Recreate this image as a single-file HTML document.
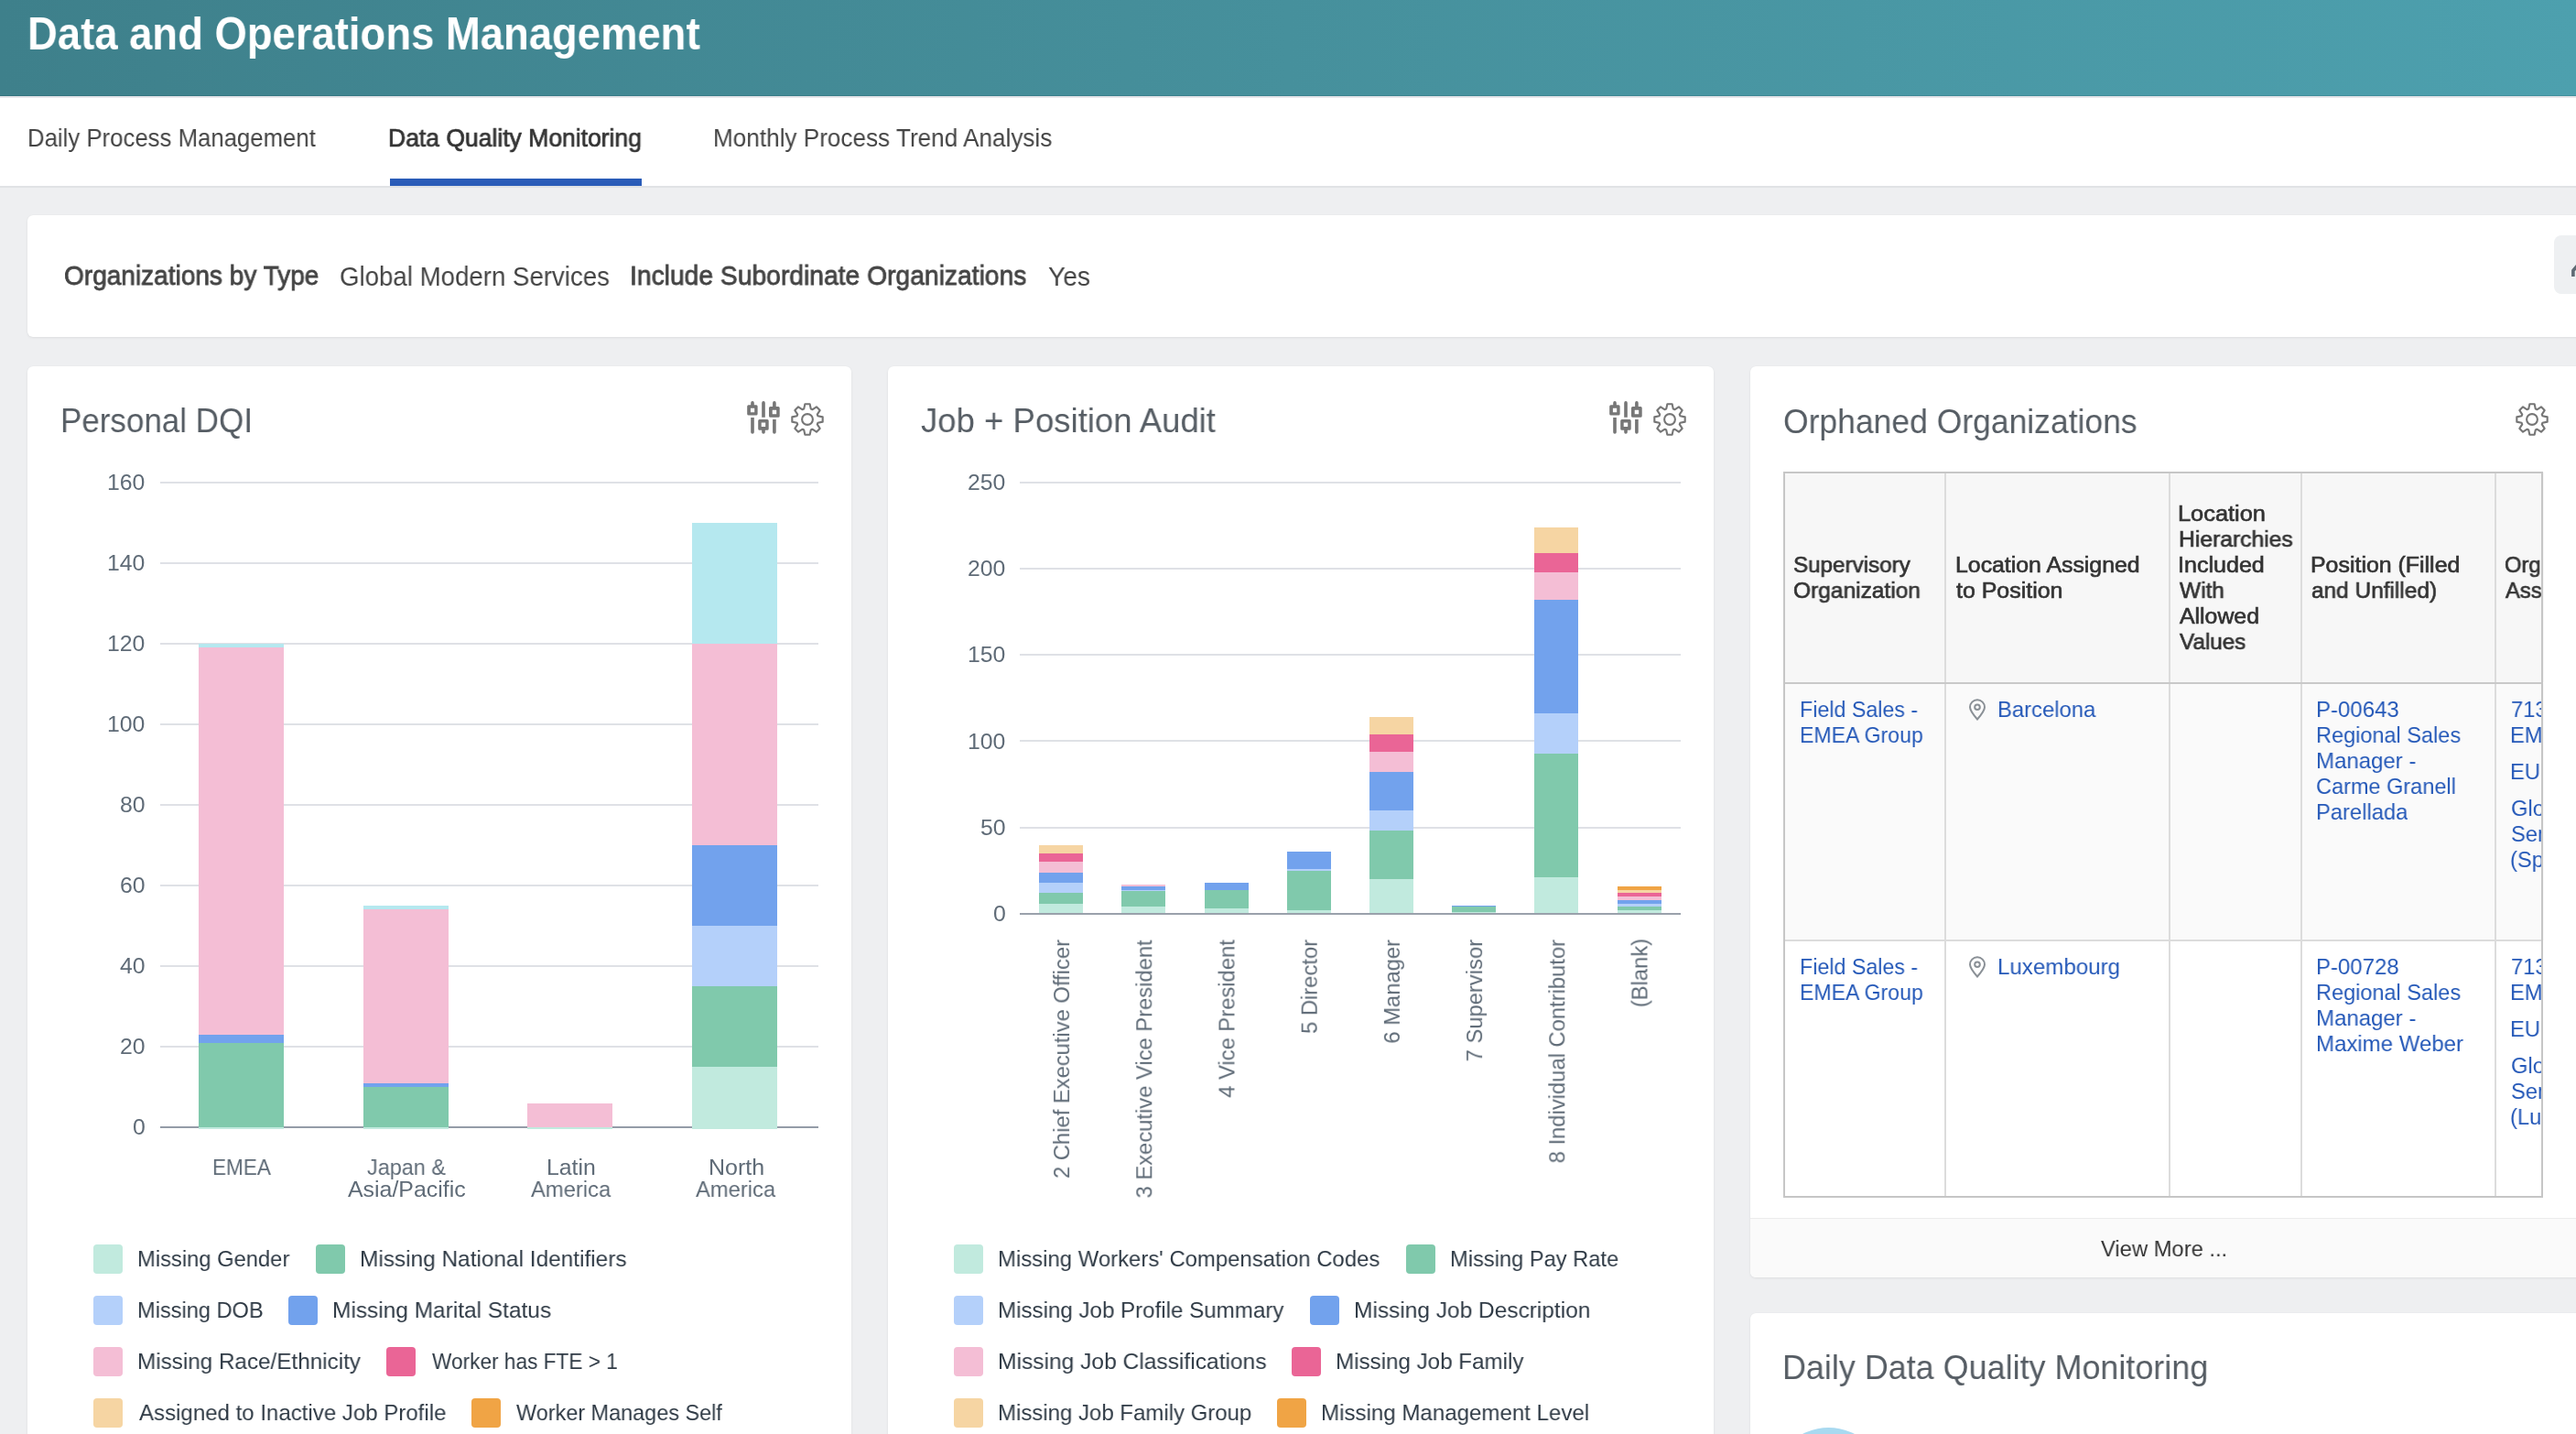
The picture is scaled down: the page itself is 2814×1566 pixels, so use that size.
<!DOCTYPE html><html><head><meta charset="utf-8"><style>
html,body{margin:0;padding:0;}
body{width:2814px;height:1566px;overflow:hidden;position:relative;background:#eeeff1;font-family:"Liberation Sans",sans-serif;}
.t{position:absolute;white-space:nowrap;transform-origin:0 0;will-change:transform;}
.r{position:absolute;}
.card{position:absolute;background:#fff;border-radius:6px;box-shadow:0 1px 3px rgba(0,0,0,0.07),0 0 1px rgba(0,0,0,0.05);}
svg{position:absolute;overflow:visible;}
</style></head><body>
<div class="r" style="left:0;top:0;width:2814px;height:105px;background:linear-gradient(90deg,#3e808b 0%,#46909c 50%,#4da0ae 100%);"></div>
<div class="r" style="left:0.00px;top:104.00px;width:2814.00px;height:1.00px;background:rgba(0,40,50,0.12);"></div>
<div class="r" style="left:0.00px;top:105.00px;width:2814.00px;height:2.00px;background:#e6e6ea;"></div>
<div class="t" style="left:29.95px;top:13.00px;font-size:49.60px;line-height:49.60px;font-weight:700;color:#ffffff;transform:scaleX(0.9160);">Data and Operations Management</div>
<div class="r" style="left:0.00px;top:107.00px;width:2814.00px;height:96.00px;background:#ffffff;"></div>
<div class="r" style="left:0.00px;top:203.00px;width:2814.00px;height:2.00px;background:#e0e2e5;"></div>
<div class="t" style="left:29.94px;top:138.00px;font-size:26.87px;line-height:26.87px;font-weight:400;color:#444444;transform:scaleX(0.9586);">Daily Process Management</div>
<div class="t" style="left:424.48px;top:138.00px;font-size:26.87px;line-height:26.87px;font-weight:400;color:#333333;transform:scaleX(0.9867);-webkit-text-stroke:0.73px #333333;">Data Quality Monitoring</div>
<div class="t" style="left:778.91px;top:138.00px;font-size:26.87px;line-height:26.87px;font-weight:400;color:#444444;transform:scaleX(0.9728);">Monthly Process Trend Analysis</div>
<div class="r" style="left:426.00px;top:195.00px;width:275.00px;height:8.00px;background:#2a5cb8;"></div>
<div class="card" style="left:30px;top:235px;width:2830px;height:133px;"></div>
<div class="t" style="left:69.94px;top:287.00px;font-size:28.94px;line-height:28.94px;font-weight:400;color:#444444;transform:scaleX(0.9686);-webkit-text-stroke:0.78px #444444;">Organizations by Type</div>
<div class="t" style="left:370.62px;top:288.00px;font-size:28.94px;line-height:28.94px;font-weight:400;color:#444444;transform:scaleX(0.9553);">Global Modern Services</div>
<div class="t" style="left:687.76px;top:287.00px;font-size:28.94px;line-height:28.94px;font-weight:400;color:#444444;transform:scaleX(0.9761);-webkit-text-stroke:0.78px #444444;">Include Subordinate Organizations</div>
<div class="t" style="left:1145.10px;top:288.00px;font-size:28.94px;line-height:28.94px;font-weight:400;color:#444444;transform:scaleX(0.9729);">Yes</div>
<div class="r" style="left:2790px;top:257px;width:60px;height:64px;background:#eef0f2;border-radius:8px;"></div>
<svg style="left:2800px;top:280px" width="20" height="30" viewBox="0 0 20 30"><path d="M10.9 22 V15.5 L16 9.5" stroke="#5f6a74" stroke-width="3.6" fill="none" stroke-linejoin="round"/></svg>
<div class="card" style="left:30px;top:400px;width:900px;height:1200px;"></div>
<div class="t" style="left:66.20px;top:441.00px;font-size:37.20px;line-height:37.20px;font-weight:400;color:#565d64;transform:scaleX(0.9405);">Personal DQI</div>
<svg style="left:816px;top:438px" width="36" height="36" viewBox="0 0 36 36"><g fill="#767676" fill-rule="evenodd">
<path d="M4.2 6V1.9a1.8 1.8 0 0 1 3.6 0V6z"/>
<path d="M1.7 4.2h8.4a1.5 1.5 0 0 1 1.5 1.5v8.4a1.5 1.5 0 0 1-1.5 1.5H1.7A1.5 1.5 0 0 1 .2 14.1V5.7a1.5 1.5 0 0 1 1.5-1.5zM3.9 7.7v4.5h4.3V7.7z"/>
<path d="M4.2 18H7.8V34a1.8 1.8 0 0 1-3.6 0z"/>
<path d="M16.2 17.7V1.9a1.8 1.8 0 0 1 3.6 0V17.7z"/>
<path d="M13.7 20.1h8.5a1.5 1.5 0 0 1 1.5 1.5v8.6a1.5 1.5 0 0 1-1.5 1.5h-8.5a1.5 1.5 0 0 1-1.5-1.5v-8.6a1.5 1.5 0 0 1 1.5-1.5zM15.7 23.6v4.5h4.5v-4.5z"/>
<path d="M16.2 30H19.8V34a1.8 1.8 0 0 1-3.6 0z"/>
<path d="M28.1 8V1.9a1.8 1.8 0 0 1 3.6 0V8z"/>
<path d="M25.5 6h8.7a1.5 1.5 0 0 1 1.5 1.5v8.7a1.5 1.5 0 0 1-1.5 1.5h-8.7A1.5 1.5 0 0 1 24 16.2V7.5A1.5 1.5 0 0 1 25.5 6zM27.7 9.7v4.5h4.5V9.7z"/>
<path d="M28.1 19.9H31.7V34a1.8 1.8 0 0 1-3.6 0z"/>
</g></svg>
<svg style="left:864px;top:440px" width="36" height="36" viewBox="0 0 36 36"><path d="M14.19 6.62 L15.36 1.31 L20.64 1.31 L21.81 6.62 A12.0 12.0 0 0 1 23.35 7.26 L27.93 4.33 L31.67 8.07 L28.74 12.65 A12.0 12.0 0 0 1 29.38 14.19 L34.69 15.36 L34.69 20.64 L29.38 21.81 A12.0 12.0 0 0 1 28.74 23.35 L31.67 27.93 L27.93 31.67 L23.35 28.74 A12.0 12.0 0 0 1 21.81 29.38 L20.64 34.69 L15.36 34.69 L14.19 29.38 A12.0 12.0 0 0 1 12.65 28.74 L8.07 31.67 L4.33 27.93 L7.26 23.35 A12.0 12.0 0 0 1 6.62 21.81 L1.31 20.64 L1.31 15.36 L6.62 14.19 A12.0 12.0 0 0 1 7.26 12.65 L4.33 8.07 L8.07 4.33 L12.65 7.26 A12.0 12.0 0 0 1 14.19 6.62Z" fill="none" stroke="#767676" stroke-width="2.1" stroke-linejoin="round"/><circle cx="18" cy="18" r="5.9" fill="none" stroke="#767676" stroke-width="2.1"/></svg>
<div class="t" style="left:144.73px;top:1219.00px;font-size:24.80px;line-height:24.80px;font-weight:400;color:#5f6b77;transform:scaleX(1.0000);">0</div>
<div class="r" style="left:175.00px;top:1142.00px;width:719.00px;height:2.00px;background:#dfe1e6;"></div>
<div class="t" style="left:130.96px;top:1131.00px;font-size:24.80px;line-height:24.80px;font-weight:400;color:#5f6b77;transform:scaleX(1.0000);">20</div>
<div class="r" style="left:175.00px;top:1054.00px;width:719.00px;height:2.00px;background:#dfe1e6;"></div>
<div class="t" style="left:130.96px;top:1043.00px;font-size:24.80px;line-height:24.80px;font-weight:400;color:#5f6b77;transform:scaleX(1.0000);">40</div>
<div class="r" style="left:175.00px;top:966.00px;width:719.00px;height:2.00px;background:#dfe1e6;"></div>
<div class="t" style="left:130.96px;top:955.00px;font-size:24.80px;line-height:24.80px;font-weight:400;color:#5f6b77;transform:scaleX(1.0000);">60</div>
<div class="r" style="left:175.00px;top:878.00px;width:719.00px;height:2.00px;background:#dfe1e6;"></div>
<div class="t" style="left:130.96px;top:867.00px;font-size:24.80px;line-height:24.80px;font-weight:400;color:#5f6b77;transform:scaleX(1.0000);">80</div>
<div class="r" style="left:175.00px;top:790.00px;width:719.00px;height:2.00px;background:#dfe1e6;"></div>
<div class="t" style="left:117.20px;top:779.00px;font-size:24.80px;line-height:24.80px;font-weight:400;color:#5f6b77;transform:scaleX(1.0000);">100</div>
<div class="r" style="left:175.00px;top:702.00px;width:719.00px;height:2.00px;background:#dfe1e6;"></div>
<div class="t" style="left:117.20px;top:691.00px;font-size:24.80px;line-height:24.80px;font-weight:400;color:#5f6b77;transform:scaleX(1.0000);">120</div>
<div class="r" style="left:175.00px;top:614.00px;width:719.00px;height:2.00px;background:#dfe1e6;"></div>
<div class="t" style="left:117.20px;top:603.00px;font-size:24.80px;line-height:24.80px;font-weight:400;color:#5f6b77;transform:scaleX(1.0000);">140</div>
<div class="r" style="left:175.00px;top:526.00px;width:719.00px;height:2.00px;background:#dfe1e6;"></div>
<div class="t" style="left:117.20px;top:515.00px;font-size:24.80px;line-height:24.80px;font-weight:400;color:#5f6b77;transform:scaleX(1.0000);">160</div>
<div class="r" style="left:175.00px;top:1230.00px;width:719.00px;height:2.00px;background:#949ca7;"></div>
<div class="r" style="left:216.98px;top:1231.00px;width:93.00px;height:2.00px;background:#c1eade;"></div>
<div class="r" style="left:216.98px;top:1138.60px;width:93.00px;height:92.40px;background:#80c9ac;"></div>
<div class="r" style="left:216.98px;top:1129.80px;width:93.00px;height:8.80px;background:#72a2ed;"></div>
<div class="r" style="left:216.98px;top:707.40px;width:93.00px;height:422.40px;background:#f4bed5;"></div>
<div class="r" style="left:216.98px;top:703.00px;width:93.00px;height:4.40px;background:#b5e8ef;"></div>
<div class="t" style="left:231.90px;top:1263.00px;font-size:24.80px;line-height:24.80px;font-weight:400;color:#5f6b77;transform:scaleX(0.9090);">EMEA</div>
<div class="r" style="left:396.73px;top:1231.00px;width:93.00px;height:2.00px;background:#c1eade;"></div>
<div class="r" style="left:396.73px;top:1187.00px;width:93.00px;height:44.00px;background:#80c9ac;"></div>
<div class="r" style="left:396.73px;top:1182.60px;width:93.00px;height:4.40px;background:#72a2ed;"></div>
<div class="r" style="left:396.73px;top:993.40px;width:93.00px;height:189.20px;background:#f4bed5;"></div>
<div class="r" style="left:396.73px;top:989.00px;width:93.00px;height:4.40px;background:#b5e8ef;"></div>
<div class="t" style="left:401.25px;top:1263.00px;font-size:24.80px;line-height:24.80px;font-weight:400;color:#5f6b77;transform:scaleX(0.9437);">Japan &amp;</div>
<div class="t" style="left:380.28px;top:1287.00px;font-size:24.80px;line-height:24.80px;font-weight:400;color:#5f6b77;transform:scaleX(1.0040);">Asia/Pacific</div>
<div class="r" style="left:576.48px;top:1231.00px;width:93.00px;height:2.00px;background:#c1eade;"></div>
<div class="r" style="left:576.48px;top:1204.60px;width:93.00px;height:26.40px;background:#f4bed5;"></div>
<div class="t" style="left:597.42px;top:1263.00px;font-size:24.80px;line-height:24.80px;font-weight:400;color:#5f6b77;transform:scaleX(0.9960);">Latin</div>
<div class="t" style="left:580.28px;top:1287.00px;font-size:24.80px;line-height:24.80px;font-weight:400;color:#5f6b77;transform:scaleX(0.9584);">America</div>
<div class="r" style="left:756.23px;top:1231.00px;width:93.00px;height:2.00px;background:#c1eade;"></div>
<div class="r" style="left:756.23px;top:1165.00px;width:93.00px;height:66.00px;background:#c1eade;"></div>
<div class="r" style="left:756.23px;top:1077.00px;width:93.00px;height:88.00px;background:#80c9ac;"></div>
<div class="r" style="left:756.23px;top:1011.00px;width:93.00px;height:66.00px;background:#b4d0fa;"></div>
<div class="r" style="left:756.23px;top:923.00px;width:93.00px;height:88.00px;background:#72a2ed;"></div>
<div class="r" style="left:756.23px;top:703.00px;width:93.00px;height:220.00px;background:#f4bed5;"></div>
<div class="r" style="left:756.23px;top:571.00px;width:93.00px;height:132.00px;background:#b5e8ef;"></div>
<div class="t" style="left:773.50px;top:1263.00px;font-size:24.80px;line-height:24.80px;font-weight:400;color:#5f6b77;transform:scaleX(1.0080);">North</div>
<div class="t" style="left:760.28px;top:1287.00px;font-size:24.80px;line-height:24.80px;font-weight:400;color:#5f6b77;transform:scaleX(0.9573);">America</div>
<div class="r" style="left:102px;top:1359px;width:32px;height:32px;border-radius:4px;background:#c1eade"></div>
<div class="t" style="left:150.10px;top:1363.00px;font-size:24.80px;line-height:24.80px;font-weight:400;color:#2f3a45;transform:scaleX(0.9576);">Missing Gender</div>
<div class="r" style="left:344.7px;top:1359px;width:32px;height:32px;border-radius:4px;background:#80c9ac"></div>
<div class="t" style="left:392.75px;top:1363.00px;font-size:24.80px;line-height:24.80px;font-weight:400;color:#2f3a45;transform:scaleX(0.9839);">Missing National Identifiers</div>
<div class="r" style="left:102px;top:1415px;width:32px;height:32px;border-radius:4px;background:#b4d0fa"></div>
<div class="t" style="left:150.11px;top:1419.00px;font-size:24.80px;line-height:24.80px;font-weight:400;color:#2f3a45;transform:scaleX(0.9513);">Missing DOB</div>
<div class="r" style="left:315px;top:1415px;width:32px;height:32px;border-radius:4px;background:#72a2ed"></div>
<div class="t" style="left:363.04px;top:1419.00px;font-size:24.80px;line-height:24.80px;font-weight:400;color:#2f3a45;transform:scaleX(0.9858);">Missing Marital Status</div>
<div class="r" style="left:102px;top:1471px;width:32px;height:32px;border-radius:4px;background:#f4bed5"></div>
<div class="t" style="left:150.06px;top:1475.00px;font-size:24.80px;line-height:24.80px;font-weight:400;color:#2f3a45;transform:scaleX(0.9778);">Missing Race/Ethnicity</div>
<div class="r" style="left:422px;top:1471px;width:32px;height:32px;border-radius:4px;background:#ea6596"></div>
<div class="t" style="left:471.89px;top:1475.00px;font-size:24.80px;line-height:24.80px;font-weight:400;color:#2f3a45;transform:scaleX(0.9132);">Worker has FTE &gt; 1</div>
<div class="r" style="left:102px;top:1527px;width:32px;height:32px;border-radius:4px;background:#f6d5a3"></div>
<div class="t" style="left:151.88px;top:1531.00px;font-size:24.80px;line-height:24.80px;font-weight:400;color:#2f3a45;transform:scaleX(0.9694);">Assigned to Inactive Job Profile</div>
<div class="r" style="left:514.5px;top:1527px;width:32px;height:32px;border-radius:4px;background:#f0a445"></div>
<div class="t" style="left:564.38px;top:1531.00px;font-size:24.80px;line-height:24.80px;font-weight:400;color:#2f3a45;transform:scaleX(0.9450);">Worker Manages Self</div>
<div class="card" style="left:970px;top:400px;width:902px;height:1200px;"></div>
<div class="t" style="left:1005.75px;top:441.00px;font-size:37.20px;line-height:37.20px;font-weight:400;color:#565d64;transform:scaleX(0.9825);">Job + Position Audit</div>
<svg style="left:1758px;top:438px" width="36" height="36" viewBox="0 0 36 36"><g fill="#767676" fill-rule="evenodd">
<path d="M4.2 6V1.9a1.8 1.8 0 0 1 3.6 0V6z"/>
<path d="M1.7 4.2h8.4a1.5 1.5 0 0 1 1.5 1.5v8.4a1.5 1.5 0 0 1-1.5 1.5H1.7A1.5 1.5 0 0 1 .2 14.1V5.7a1.5 1.5 0 0 1 1.5-1.5zM3.9 7.7v4.5h4.3V7.7z"/>
<path d="M4.2 18H7.8V34a1.8 1.8 0 0 1-3.6 0z"/>
<path d="M16.2 17.7V1.9a1.8 1.8 0 0 1 3.6 0V17.7z"/>
<path d="M13.7 20.1h8.5a1.5 1.5 0 0 1 1.5 1.5v8.6a1.5 1.5 0 0 1-1.5 1.5h-8.5a1.5 1.5 0 0 1-1.5-1.5v-8.6a1.5 1.5 0 0 1 1.5-1.5zM15.7 23.6v4.5h4.5v-4.5z"/>
<path d="M16.2 30H19.8V34a1.8 1.8 0 0 1-3.6 0z"/>
<path d="M28.1 8V1.9a1.8 1.8 0 0 1 3.6 0V8z"/>
<path d="M25.5 6h8.7a1.5 1.5 0 0 1 1.5 1.5v8.7a1.5 1.5 0 0 1-1.5 1.5h-8.7A1.5 1.5 0 0 1 24 16.2V7.5A1.5 1.5 0 0 1 25.5 6zM27.7 9.7v4.5h4.5V9.7z"/>
<path d="M28.1 19.9H31.7V34a1.8 1.8 0 0 1-3.6 0z"/>
</g></svg>
<svg style="left:1805.5px;top:440px" width="36" height="36" viewBox="0 0 36 36"><path d="M14.19 6.62 L15.36 1.31 L20.64 1.31 L21.81 6.62 A12.0 12.0 0 0 1 23.35 7.26 L27.93 4.33 L31.67 8.07 L28.74 12.65 A12.0 12.0 0 0 1 29.38 14.19 L34.69 15.36 L34.69 20.64 L29.38 21.81 A12.0 12.0 0 0 1 28.74 23.35 L31.67 27.93 L27.93 31.67 L23.35 28.74 A12.0 12.0 0 0 1 21.81 29.38 L20.64 34.69 L15.36 34.69 L14.19 29.38 A12.0 12.0 0 0 1 12.65 28.74 L8.07 31.67 L4.33 27.93 L7.26 23.35 A12.0 12.0 0 0 1 6.62 21.81 L1.31 20.64 L1.31 15.36 L6.62 14.19 A12.0 12.0 0 0 1 7.26 12.65 L4.33 8.07 L8.07 4.33 L12.65 7.26 A12.0 12.0 0 0 1 14.19 6.62Z" fill="none" stroke="#767676" stroke-width="2.1" stroke-linejoin="round"/><circle cx="18" cy="18" r="5.9" fill="none" stroke="#767676" stroke-width="2.1"/></svg>
<div class="t" style="left:1084.73px;top:986.00px;font-size:24.80px;line-height:24.80px;font-weight:400;color:#5f6b77;transform:scaleX(1.0000);">0</div>
<div class="r" style="left:1114.40px;top:902.70px;width:721.60px;height:2.00px;background:#dfe1e6;"></div>
<div class="t" style="left:1070.96px;top:892.00px;font-size:24.80px;line-height:24.80px;font-weight:400;color:#5f6b77;transform:scaleX(1.0000);">50</div>
<div class="r" style="left:1114.40px;top:808.40px;width:721.60px;height:2.00px;background:#dfe1e6;"></div>
<div class="t" style="left:1057.20px;top:798.00px;font-size:24.80px;line-height:24.80px;font-weight:400;color:#5f6b77;transform:scaleX(1.0000);">100</div>
<div class="r" style="left:1114.40px;top:714.10px;width:721.60px;height:2.00px;background:#dfe1e6;"></div>
<div class="t" style="left:1057.20px;top:703.00px;font-size:24.80px;line-height:24.80px;font-weight:400;color:#5f6b77;transform:scaleX(1.0000);">150</div>
<div class="r" style="left:1114.40px;top:619.80px;width:721.60px;height:2.00px;background:#dfe1e6;"></div>
<div class="t" style="left:1057.20px;top:609.00px;font-size:24.80px;line-height:24.80px;font-weight:400;color:#5f6b77;transform:scaleX(1.0000);">200</div>
<div class="r" style="left:1114.40px;top:525.50px;width:721.60px;height:2.00px;background:#dfe1e6;"></div>
<div class="t" style="left:1057.20px;top:515.00px;font-size:24.80px;line-height:24.80px;font-weight:400;color:#5f6b77;transform:scaleX(1.0000);">250</div>
<div class="r" style="left:1135.10px;top:986.68px;width:48.00px;height:11.32px;background:#c1eade;"></div>
<div class="r" style="left:1135.10px;top:975.37px;width:48.00px;height:11.32px;background:#80c9ac;"></div>
<div class="r" style="left:1135.10px;top:964.05px;width:48.00px;height:11.32px;background:#b4d0fa;"></div>
<div class="r" style="left:1135.10px;top:952.74px;width:48.00px;height:11.32px;background:#72a2ed;"></div>
<div class="r" style="left:1135.10px;top:941.42px;width:48.00px;height:11.32px;background:#f4bed5;"></div>
<div class="r" style="left:1135.10px;top:931.99px;width:48.00px;height:9.43px;background:#ea6596;"></div>
<div class="r" style="left:1135.10px;top:922.56px;width:48.00px;height:9.43px;background:#f6d5a3;"></div>
<div class="t" style="left:0;top:0;font-size:24.80px;line-height:24.80px;color:#5f6b77;transform:translate(1148.10px,1287.05px) rotate(-90deg) scaleX(0.9580);">2 Chief Executive Officer</div>
<div class="r" style="left:1225.30px;top:990.46px;width:48.00px;height:7.54px;background:#c1eade;"></div>
<div class="r" style="left:1225.30px;top:973.48px;width:48.00px;height:16.97px;background:#80c9ac;"></div>
<div class="r" style="left:1225.30px;top:971.60px;width:48.00px;height:1.89px;background:#b4d0fa;"></div>
<div class="r" style="left:1225.30px;top:967.82px;width:48.00px;height:3.77px;background:#72a2ed;"></div>
<div class="r" style="left:1225.30px;top:965.94px;width:48.00px;height:1.89px;background:#f4bed5;"></div>
<div class="t" style="left:0;top:0;font-size:24.80px;line-height:24.80px;color:#5f6b77;transform:translate(1238.30px,1308.44px) rotate(-90deg) scaleX(0.9580);">3 Executive Vice President</div>
<div class="r" style="left:1315.50px;top:992.34px;width:48.00px;height:5.66px;background:#c1eade;"></div>
<div class="r" style="left:1315.50px;top:971.60px;width:48.00px;height:20.75px;background:#80c9ac;"></div>
<div class="r" style="left:1315.50px;top:964.05px;width:48.00px;height:7.54px;background:#72a2ed;"></div>
<div class="t" style="left:0;top:0;font-size:24.80px;line-height:24.80px;color:#5f6b77;transform:translate(1328.50px,1198.78px) rotate(-90deg) scaleX(0.9580);">4 Vice President</div>
<div class="r" style="left:1405.70px;top:994.23px;width:48.00px;height:3.77px;background:#c1eade;"></div>
<div class="r" style="left:1405.70px;top:950.85px;width:48.00px;height:43.38px;background:#80c9ac;"></div>
<div class="r" style="left:1405.70px;top:948.96px;width:48.00px;height:1.89px;background:#b4d0fa;"></div>
<div class="r" style="left:1405.70px;top:930.10px;width:48.00px;height:18.86px;background:#72a2ed;"></div>
<div class="t" style="left:0;top:0;font-size:24.80px;line-height:24.80px;color:#5f6b77;transform:translate(1418.70px,1128.93px) rotate(-90deg) scaleX(0.9580);">5 Director</div>
<div class="r" style="left:1495.90px;top:960.28px;width:48.00px;height:37.72px;background:#c1eade;"></div>
<div class="r" style="left:1495.90px;top:907.47px;width:48.00px;height:52.81px;background:#80c9ac;"></div>
<div class="r" style="left:1495.90px;top:884.84px;width:48.00px;height:22.63px;background:#b4d0fa;"></div>
<div class="r" style="left:1495.90px;top:843.35px;width:48.00px;height:41.49px;background:#72a2ed;"></div>
<div class="r" style="left:1495.90px;top:820.72px;width:48.00px;height:22.63px;background:#f4bed5;"></div>
<div class="r" style="left:1495.90px;top:801.86px;width:48.00px;height:18.86px;background:#ea6596;"></div>
<div class="r" style="left:1495.90px;top:783.00px;width:48.00px;height:18.86px;background:#f6d5a3;"></div>
<div class="t" style="left:0;top:0;font-size:24.80px;line-height:24.80px;color:#5f6b77;transform:translate(1508.90px,1139.62px) rotate(-90deg) scaleX(0.9580);">6 Manager</div>
<div class="r" style="left:1586.10px;top:996.11px;width:48.00px;height:1.89px;background:#c1eade;"></div>
<div class="r" style="left:1586.10px;top:990.46px;width:48.00px;height:5.66px;background:#80c9ac;"></div>
<div class="r" style="left:1586.10px;top:988.57px;width:48.00px;height:1.89px;background:#72a2ed;"></div>
<div class="t" style="left:0;top:0;font-size:24.80px;line-height:24.80px;color:#5f6b77;transform:translate(1599.10px,1159.34px) rotate(-90deg) scaleX(0.9580);">7 Supervisor</div>
<div class="r" style="left:1676.30px;top:958.39px;width:48.00px;height:39.61px;background:#c1eade;"></div>
<div class="r" style="left:1676.30px;top:822.60px;width:48.00px;height:135.79px;background:#80c9ac;"></div>
<div class="r" style="left:1676.30px;top:779.22px;width:48.00px;height:43.38px;background:#b4d0fa;"></div>
<div class="r" style="left:1676.30px;top:654.75px;width:48.00px;height:124.48px;background:#72a2ed;"></div>
<div class="r" style="left:1676.30px;top:624.57px;width:48.00px;height:30.18px;background:#f4bed5;"></div>
<div class="r" style="left:1676.30px;top:603.83px;width:48.00px;height:20.75px;background:#ea6596;"></div>
<div class="r" style="left:1676.30px;top:575.54px;width:48.00px;height:28.29px;background:#f6d5a3;"></div>
<div class="t" style="left:0;top:0;font-size:24.80px;line-height:24.80px;color:#5f6b77;transform:translate(1689.30px,1270.30px) rotate(-90deg) scaleX(0.9580);">8 Individual Contributor</div>
<div class="r" style="left:1766.50px;top:994.23px;width:48.00px;height:3.77px;background:#c1eade;"></div>
<div class="r" style="left:1766.50px;top:990.46px;width:48.00px;height:3.77px;background:#80c9ac;"></div>
<div class="r" style="left:1766.50px;top:986.68px;width:48.00px;height:3.77px;background:#b4d0fa;"></div>
<div class="r" style="left:1766.50px;top:982.91px;width:48.00px;height:3.77px;background:#72a2ed;"></div>
<div class="r" style="left:1766.50px;top:979.14px;width:48.00px;height:3.77px;background:#f4bed5;"></div>
<div class="r" style="left:1766.50px;top:975.37px;width:48.00px;height:3.77px;background:#ea6596;"></div>
<div class="r" style="left:1766.50px;top:971.60px;width:48.00px;height:3.77px;background:#f6d5a3;"></div>
<div class="r" style="left:1766.50px;top:967.82px;width:48.00px;height:3.77px;background:#f0a445;"></div>
<div class="t" style="left:0;top:0;font-size:24.80px;line-height:24.80px;color:#5f6b77;transform:translate(1779.50px,1100.18px) rotate(-90deg) scaleX(0.9580);">(Blank)</div>
<div class="r" style="left:1114.40px;top:997.40px;width:721.60px;height:2.00px;background:#9aa1ab;"></div>
<div class="r" style="left:1041.8px;top:1359px;width:32px;height:32px;border-radius:4px;background:#c1eade"></div>
<div class="t" style="left:1089.89px;top:1363.00px;font-size:24.80px;line-height:24.80px;font-weight:400;color:#2f3a45;transform:scaleX(0.9640);">Missing Workers' Compensation Codes</div>
<div class="r" style="left:1535.5px;top:1359px;width:32px;height:32px;border-radius:4px;background:#80c9ac"></div>
<div class="t" style="left:1583.61px;top:1363.00px;font-size:24.80px;line-height:24.80px;font-weight:400;color:#2f3a45;transform:scaleX(0.9544);">Missing Pay Rate</div>
<div class="r" style="left:1041.8px;top:1415px;width:32px;height:32px;border-radius:4px;background:#b4d0fa"></div>
<div class="t" style="left:1089.87px;top:1419.00px;font-size:24.80px;line-height:24.80px;font-weight:400;color:#2f3a45;transform:scaleX(0.9728);">Missing Job Profile Summary</div>
<div class="r" style="left:1430.8px;top:1415px;width:32px;height:32px;border-radius:4px;background:#72a2ed"></div>
<div class="t" style="left:1478.84px;top:1419.00px;font-size:24.80px;line-height:24.80px;font-weight:400;color:#2f3a45;transform:scaleX(0.9868);">Missing Job Description</div>
<div class="r" style="left:1041.8px;top:1471px;width:32px;height:32px;border-radius:4px;background:#f4bed5"></div>
<div class="t" style="left:1089.83px;top:1475.00px;font-size:24.80px;line-height:24.80px;font-weight:400;color:#2f3a45;transform:scaleX(0.9907);">Missing Job Classifications</div>
<div class="r" style="left:1411.3px;top:1471px;width:32px;height:32px;border-radius:4px;background:#ea6596"></div>
<div class="t" style="left:1459.37px;top:1475.00px;font-size:24.80px;line-height:24.80px;font-weight:400;color:#2f3a45;transform:scaleX(0.9741);">Missing Job Family</div>
<div class="r" style="left:1041.8px;top:1527px;width:32px;height:32px;border-radius:4px;background:#f6d5a3"></div>
<div class="t" style="left:1089.88px;top:1531.00px;font-size:24.80px;line-height:24.80px;font-weight:400;color:#2f3a45;transform:scaleX(0.9674);">Missing Job Family Group</div>
<div class="r" style="left:1395px;top:1527px;width:32px;height:32px;border-radius:4px;background:#f0a445"></div>
<div class="t" style="left:1443.07px;top:1531.00px;font-size:24.80px;line-height:24.80px;font-weight:400;color:#2f3a45;transform:scaleX(0.9713);">Missing Management Level</div>
<div class="card" style="left:1912px;top:400px;width:950px;height:994.5px;overflow:hidden;">
<div class="r" style="left:0;top:930px;width:950px;height:64.5px;background:#fafafa;border-top:1px solid #ececec;box-sizing:border-box;"></div>
</div>
<div class="t" style="left:1948.10px;top:442.00px;font-size:37.20px;line-height:37.20px;font-weight:400;color:#565d64;transform:scaleX(0.9541);">Orphaned Organizations</div>
<svg style="left:2748px;top:440px" width="36" height="36" viewBox="0 0 36 36"><path d="M14.19 6.62 L15.36 1.31 L20.64 1.31 L21.81 6.62 A12.0 12.0 0 0 1 23.35 7.26 L27.93 4.33 L31.67 8.07 L28.74 12.65 A12.0 12.0 0 0 1 29.38 14.19 L34.69 15.36 L34.69 20.64 L29.38 21.81 A12.0 12.0 0 0 1 28.74 23.35 L31.67 27.93 L27.93 31.67 L23.35 28.74 A12.0 12.0 0 0 1 21.81 29.38 L20.64 34.69 L15.36 34.69 L14.19 29.38 A12.0 12.0 0 0 1 12.65 28.74 L8.07 31.67 L4.33 27.93 L7.26 23.35 A12.0 12.0 0 0 1 6.62 21.81 L1.31 20.64 L1.31 15.36 L6.62 14.19 A12.0 12.0 0 0 1 7.26 12.65 L4.33 8.07 L8.07 4.33 L12.65 7.26 A12.0 12.0 0 0 1 14.19 6.62Z" fill="none" stroke="#767676" stroke-width="2.1" stroke-linejoin="round"/><circle cx="18" cy="18" r="5.9" fill="none" stroke="#767676" stroke-width="2.1"/></svg>
<div class="r" style="left:1948.60px;top:515.60px;width:830.40px;height:229.90px;background:#f7f7f7;"></div>
<div class="r" style="left:1948.60px;top:745.50px;width:830.40px;height:281.20px;background:#fafafa;"></div>
<div class="r" style="left:1948.60px;top:1026.70px;width:830.40px;height:281.90px;background:#ffffff;"></div>
<div class="r" style="left:2124.30px;top:515.60px;width:2.00px;height:792.00px;background:#dcdcdc;"></div>
<div class="r" style="left:2369.20px;top:515.60px;width:2.00px;height:792.00px;background:#dcdcdc;"></div>
<div class="r" style="left:2512.90px;top:515.60px;width:2.00px;height:792.00px;background:#dcdcdc;"></div>
<div class="r" style="left:2725.00px;top:515.60px;width:2.00px;height:792.00px;background:#dcdcdc;"></div>
<div class="r" style="left:1948.60px;top:744.50px;width:828.40px;height:2.00px;background:#c9c9c9;"></div>
<div class="r" style="left:1948.60px;top:1025.70px;width:828.40px;height:2.00px;background:#dcdcdc;"></div>
<div class="r" style="left:1947.60px;top:514.60px;width:830.40px;height:793.00px;border:2px solid #c6c6c6;box-sizing:border-box;"></div>
<div class="t" style="left:1959.21px;top:605.00px;font-size:24.80px;line-height:24.80px;font-weight:400;color:#333333;transform:scaleX(0.9760);-webkit-text-stroke:0.67px #333333;">Supervisory</div>
<div class="t" style="left:1959.20px;top:633.00px;font-size:24.80px;line-height:24.80px;font-weight:400;color:#333333;transform:scaleX(0.9884);-webkit-text-stroke:0.67px #333333;">Organization</div>
<div class="t" style="left:2135.61px;top:605.00px;font-size:24.80px;line-height:24.80px;font-weight:400;color:#333333;transform:scaleX(1.0016);-webkit-text-stroke:0.67px #333333;">Location Assigned</div>
<div class="t" style="left:2136.93px;top:633.00px;font-size:24.80px;line-height:24.80px;font-weight:400;color:#333333;transform:scaleX(1.0058);-webkit-text-stroke:0.67px #333333;">to Position</div>
<div class="t" style="left:2379.47px;top:549.00px;font-size:24.80px;line-height:24.80px;font-weight:400;color:#333333;transform:scaleX(1.0238);-webkit-text-stroke:0.67px #333333;">Location</div>
<div class="t" style="left:2379.53px;top:577.00px;font-size:24.80px;line-height:24.80px;font-weight:400;color:#333333;transform:scaleX(0.9941);-webkit-text-stroke:0.67px #333333;">Hierarchies</div>
<div class="t" style="left:2379.24px;top:605.00px;font-size:24.80px;line-height:24.80px;font-weight:400;color:#333333;transform:scaleX(1.0110);-webkit-text-stroke:0.67px #333333;">Included</div>
<div class="t" style="left:2381.38px;top:633.00px;font-size:24.80px;line-height:24.80px;font-weight:400;color:#333333;transform:scaleX(0.9860);-webkit-text-stroke:0.67px #333333;">With</div>
<div class="t" style="left:2381.38px;top:661.00px;font-size:24.80px;line-height:24.80px;font-weight:400;color:#333333;transform:scaleX(1.0015);-webkit-text-stroke:0.67px #333333;">Allowed</div>
<div class="t" style="left:2381.38px;top:689.00px;font-size:24.80px;line-height:24.80px;font-weight:400;color:#333333;transform:scaleX(0.9775);-webkit-text-stroke:0.67px #333333;">Values</div>
<div class="t" style="left:2523.61px;top:605.00px;font-size:24.80px;line-height:24.80px;font-weight:400;color:#333333;transform:scaleX(1.0045);-webkit-text-stroke:0.67px #333333;">Position (Filled</div>
<div class="t" style="left:2524.62px;top:633.00px;font-size:24.80px;line-height:24.80px;font-weight:400;color:#333333;transform:scaleX(0.9842);-webkit-text-stroke:0.67px #333333;">and Unfilled)</div>
<div style="position:absolute;left:2727px;top:500px;width:49px;height:810px;overflow:hidden;">
<div style="position:absolute;left:-2727px;top:-500px;width:2814px;height:1566px;">
<div class="t" style="left:2736.33px;top:605.00px;font-size:24.80px;line-height:24.80px;font-weight:400;color:#333333;transform:scaleX(0.9580);-webkit-text-stroke:0.67px #333333;">Org</div>
<div class="t" style="left:2737.28px;top:633.00px;font-size:24.80px;line-height:24.80px;font-weight:400;color:#333333;transform:scaleX(0.9580);-webkit-text-stroke:0.67px #333333;">Assigned</div>
<div class="t" style="left:2742.61px;top:763.00px;font-size:24.80px;line-height:24.80px;font-weight:400;color:#2458b8;transform:scaleX(0.9580);">7139 Sales</div>
<div class="t" style="left:2741.90px;top:791.00px;font-size:24.80px;line-height:24.80px;font-weight:400;color:#2458b8;transform:scaleX(0.9580);">EMEA</div>
<div class="t" style="left:2741.90px;top:831.00px;font-size:24.80px;line-height:24.80px;font-weight:400;color:#2458b8;transform:scaleX(0.9580);">EU</div>
<div class="t" style="left:2742.61px;top:871.00px;font-size:24.80px;line-height:24.80px;font-weight:400;color:#2458b8;transform:scaleX(0.9580);">Global</div>
<div class="t" style="left:2742.73px;top:899.00px;font-size:24.80px;line-height:24.80px;font-weight:400;color:#2458b8;transform:scaleX(0.9580);">Services</div>
<div class="t" style="left:2742.37px;top:927.00px;font-size:24.80px;line-height:24.80px;font-weight:400;color:#2458b8;transform:scaleX(0.9580);">(Spain)</div>
<div class="t" style="left:2742.61px;top:1044.00px;font-size:24.80px;line-height:24.80px;font-weight:400;color:#2458b8;transform:scaleX(0.9580);">7139 Sales</div>
<div class="t" style="left:2741.90px;top:1072.00px;font-size:24.80px;line-height:24.80px;font-weight:400;color:#2458b8;transform:scaleX(0.9580);">EMEA</div>
<div class="t" style="left:2741.90px;top:1112.00px;font-size:24.80px;line-height:24.80px;font-weight:400;color:#2458b8;transform:scaleX(0.9580);">EU</div>
<div class="t" style="left:2742.61px;top:1152.00px;font-size:24.80px;line-height:24.80px;font-weight:400;color:#2458b8;transform:scaleX(0.9580);">Global</div>
<div class="t" style="left:2742.73px;top:1180.00px;font-size:24.80px;line-height:24.80px;font-weight:400;color:#2458b8;transform:scaleX(0.9580);">Services</div>
<div class="t" style="left:2742.37px;top:1208.00px;font-size:24.80px;line-height:24.80px;font-weight:400;color:#2458b8;transform:scaleX(0.9580);">(Luxembourg)</div>
</div></div>
<div class="t" style="left:1965.94px;top:763.00px;font-size:24.80px;line-height:24.80px;font-weight:400;color:#2458b8;transform:scaleX(0.9369);">Field Sales -</div>
<div class="t" style="left:1965.95px;top:791.00px;font-size:24.80px;line-height:24.80px;font-weight:400;color:#2458b8;transform:scaleX(0.9312);">EMEA Group</div>
<svg style="left:2149.5px;top:762.5px" width="20" height="24" viewBox="0 0 20 24"><path d="M10 22.5 C6 18 2 13.5 2 9.3 A8 8 0 0 1 18 9.3 C18 13.5 14 18 10 22.5Z" fill="none" stroke="#8a9096" stroke-width="2"/><circle cx="10" cy="9.3" r="2.8" fill="none" stroke="#8a9096" stroke-width="2"/></svg>
<div class="t" style="left:2181.99px;top:763.00px;font-size:24.80px;line-height:24.80px;font-weight:400;color:#2458b8;transform:scaleX(0.9614);">Barcelona</div>
<div class="t" style="left:2529.68px;top:763.00px;font-size:24.80px;line-height:24.80px;font-weight:400;color:#2458b8;transform:scaleX(0.9674);">P-00643</div>
<div class="t" style="left:2529.72px;top:791.00px;font-size:24.80px;line-height:24.80px;font-weight:400;color:#2458b8;transform:scaleX(0.9479);">Regional Sales</div>
<div class="t" style="left:2529.68px;top:819.00px;font-size:24.80px;line-height:24.80px;font-weight:400;color:#2458b8;transform:scaleX(0.9682);">Manager -</div>
<div class="t" style="left:2530.42px;top:847.00px;font-size:24.80px;line-height:24.80px;font-weight:400;color:#2458b8;transform:scaleX(0.9478);">Carme Granell</div>
<div class="t" style="left:2529.70px;top:875.00px;font-size:24.80px;line-height:24.80px;font-weight:400;color:#2458b8;transform:scaleX(0.9571);">Parellada</div>
<div class="t" style="left:1965.94px;top:1044.00px;font-size:24.80px;line-height:24.80px;font-weight:400;color:#2458b8;transform:scaleX(0.9369);">Field Sales -</div>
<div class="t" style="left:1965.95px;top:1072.00px;font-size:24.80px;line-height:24.80px;font-weight:400;color:#2458b8;transform:scaleX(0.9312);">EMEA Group</div>
<svg style="left:2149.5px;top:1043.5px" width="20" height="24" viewBox="0 0 20 24"><path d="M10 22.5 C6 18 2 13.5 2 9.3 A8 8 0 0 1 18 9.3 C18 13.5 14 18 10 22.5Z" fill="none" stroke="#8a9096" stroke-width="2"/><circle cx="10" cy="9.3" r="2.8" fill="none" stroke="#8a9096" stroke-width="2"/></svg>
<div class="t" style="left:2181.97px;top:1044.00px;font-size:24.80px;line-height:24.80px;font-weight:400;color:#2458b8;transform:scaleX(0.9724);">Luxembourg</div>
<div class="t" style="left:2529.68px;top:1044.00px;font-size:24.80px;line-height:24.80px;font-weight:400;color:#2458b8;transform:scaleX(0.9661);">P-00728</div>
<div class="t" style="left:2529.72px;top:1072.00px;font-size:24.80px;line-height:24.80px;font-weight:400;color:#2458b8;transform:scaleX(0.9479);">Regional Sales</div>
<div class="t" style="left:2529.68px;top:1100.00px;font-size:24.80px;line-height:24.80px;font-weight:400;color:#2458b8;transform:scaleX(0.9682);">Manager -</div>
<div class="t" style="left:2529.68px;top:1128.00px;font-size:24.80px;line-height:24.80px;font-weight:400;color:#2458b8;transform:scaleX(0.9680);">Maxime Weber</div>
<div class="t" style="left:2294.83px;top:1352.00px;font-size:24.80px;line-height:24.80px;font-weight:400;color:#333333;transform:scaleX(0.9580);">View More ...</div>
<div class="card" style="left:1912px;top:1434px;width:950px;height:300px;"></div>
<div class="t" style="left:1946.82px;top:1475.00px;font-size:37.20px;line-height:37.20px;font-weight:400;color:#565d64;transform:scaleX(0.9660);">Daily Data Quality Monitoring</div>
<div class="r" style="left:1936px;top:1559px;width:123px;height:123px;border-radius:50%;background:#a8d9f0;"></div>
</body></html>
